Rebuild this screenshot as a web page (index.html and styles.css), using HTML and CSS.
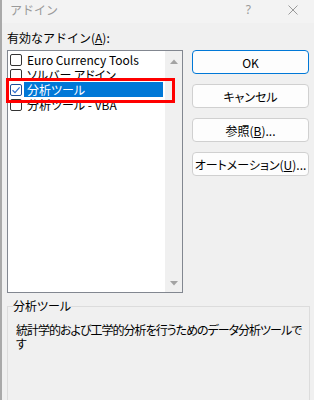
FILE: index.html
```html
<!DOCTYPE html>
<html lang="ja">
<head>
    <meta charset="UTF-8">
    <title>アドイン</title>
    <link rel="stylesheet" href="styles.css">
</head>
<body>
    <div class="dialog">
        <div class="titlebar">
            <span class="title">アドイン</span>
            <span class="help">?</span>
            <svg class="close" width="10" height="10" viewBox="0 0 10 10">
                <path d="M0.5 0.5L9.5 9.5M9.5 0.5L0.5 9.5" stroke="#9a9a9a" stroke-width="1" fill="none"/>
            </svg>
        </div>

        <div class="main">
            <div class="left">
                <div class="label">有効なアドイン(<u>A</u>):</div>
                <div class="listbox">
                    <div class="items">
                        <div class="item"><span class="check"></span><span class="name">Euro Currency Tools</span></div>
                        <div class="item"><span class="check"></span><span class="name">ソルバー アドイン</span></div>
                        <div class="item selected">
                            <span class="check checked">
                                <svg width="10" height="10" viewBox="0 0 10 10"><path d="M1.5 5.2L4 7.6L8.6 2.4" stroke="#2f6fd0" stroke-width="1.2" fill="none"/></svg>
                            </span><span class="name">分析ツール</span>
                        </div>
                        <div class="item"><span class="check"></span><span class="name">分析ツール - VBA</span></div>
                    </div>
                    <div class="scrollbar">
                        <svg width="8" height="5" viewBox="0 0 8 5"><path d="M0 5L4 0.5L8 5Z" fill="#a3a3a3"/></svg>
                        <svg width="8" height="5" viewBox="0 0 8 5"><path d="M0 0L8 0L4 4.5Z" fill="#a3a3a3"/></svg>
                    </div>
                </div>
            </div>

            <div class="buttons">
                <button class="btn default">OK</button>
                <button class="btn">キャンセル</button>
                <button class="btn">参照(<u>B</u>)...</button>
                <button class="btn">オートメーション(<u>U</u>)...</button>
            </div>
        </div>

        <fieldset class="group">
            <legend>分析ツール</legend>
            <p class="desc">統計学的および工学的分析を行うためのデータ分析ツールです</p>
        </fieldset>

        <!-- 注釈の赤枠 -->
        <div class="highlight-box"></div>
    </div>
</body>
</html>
```

FILE: styles.css
```css
body {
    margin: 0;
    font-family: "Noto Sans CJK JP", sans-serif;
    font-size: 12px;
    color: #000;
    background: #f0f0f0;
}
.dialog {
    position: relative;
    width: 314px;
    height: 400px;
    box-sizing: border-box;
    border-left: 2px solid #a9a9a9;
    background: #f0f0f0;
    overflow: hidden;
}
.titlebar {
    height: 23px;
    display: flex;
    align-items: center;
    padding: 0 0 4px 8px;
    box-sizing: border-box;
    background: #f3f3f3;
    color: #9a9a9a;
}
.title {
    flex: 1;
    font-size: 12px;
}
.help {
    margin-right: 37px;
    font-family: "Noto Sans", sans-serif;
    font-size: 12px;
}
.close {
    margin-right: 16px;
}
.main {
    display: flex;
    padding-left: 5px;
}
.left {
    width: 176px;
}
.label {
    padding-top: 7px;
    line-height: 16px;
    margin-bottom: 4px;
}
.listbox {
    height: 243px;
    box-sizing: border-box;
    border: 1px solid #828790;
    background: #fff;
    display: flex;
}
.items {
    flex: 1;
    padding-top: 1px;
}
.item {
    height: 15px;
    display: flex;
    align-items: center;
}
.check {
    width: 12px;
    height: 12px;
    box-sizing: border-box;
    margin-left: 2px;
    border: 1px solid #333;
    border-radius: 2px;
    background: #fff;
    display: flex;
    align-items: center;
    justify-content: center;
}
.check.checked {
    border-color: #1d4f9a;
}
.name {
    flex: 1;
    margin: 0 2px 0 2px;
    padding: 0 3px;
    line-height: 15px;
    white-space: nowrap;
    font-feature-settings: "palt";
}
.selected .name {
    background: #0078d7;
    color: #fff;
}
.scrollbar {
    width: 17px;
    background: #f0f0f0;
    display: flex;
    flex-direction: column;
    justify-content: space-between;
    align-items: center;
    padding: 8px 0 6px;
    box-sizing: border-box;
}
.buttons {
    margin-left: 9px;
    padding-top: 27px;
    width: 117px;
    display: flex;
    flex-direction: column;
    gap: 10px;
}
.btn {
    height: 24px;
    padding: 0;
    font-family: inherit;
    font-size: 12px;
    color: #000;
    background: #fdfdfd;
    border: 1px solid #d0d0d0;
    border-radius: 4px;
    font-feature-settings: "palt";
}
.btn.default {
    border-color: #0078d7;
}
.group {
    margin: 5px 0 0 5px;
    width: 303px;
    height: 130px;
    box-sizing: border-box;
    padding: 0 2px 0 5px;
    border: 1px solid #dcdcdc;
}
.group legend {
    padding: 0;
    line-height: 16px;
    font-feature-settings: "palt";
}
.desc {
    margin: 9px 0 0 3px;
    line-height: 14px;
    letter-spacing: -1px;
    font-feature-settings: "palt";
}
.highlight-box {
    position: absolute;
    left: 4px;
    top: 78px;
    width: 169px;
    height: 25px;
    box-sizing: border-box;
    border: 3px solid #ff0000;
}
```
